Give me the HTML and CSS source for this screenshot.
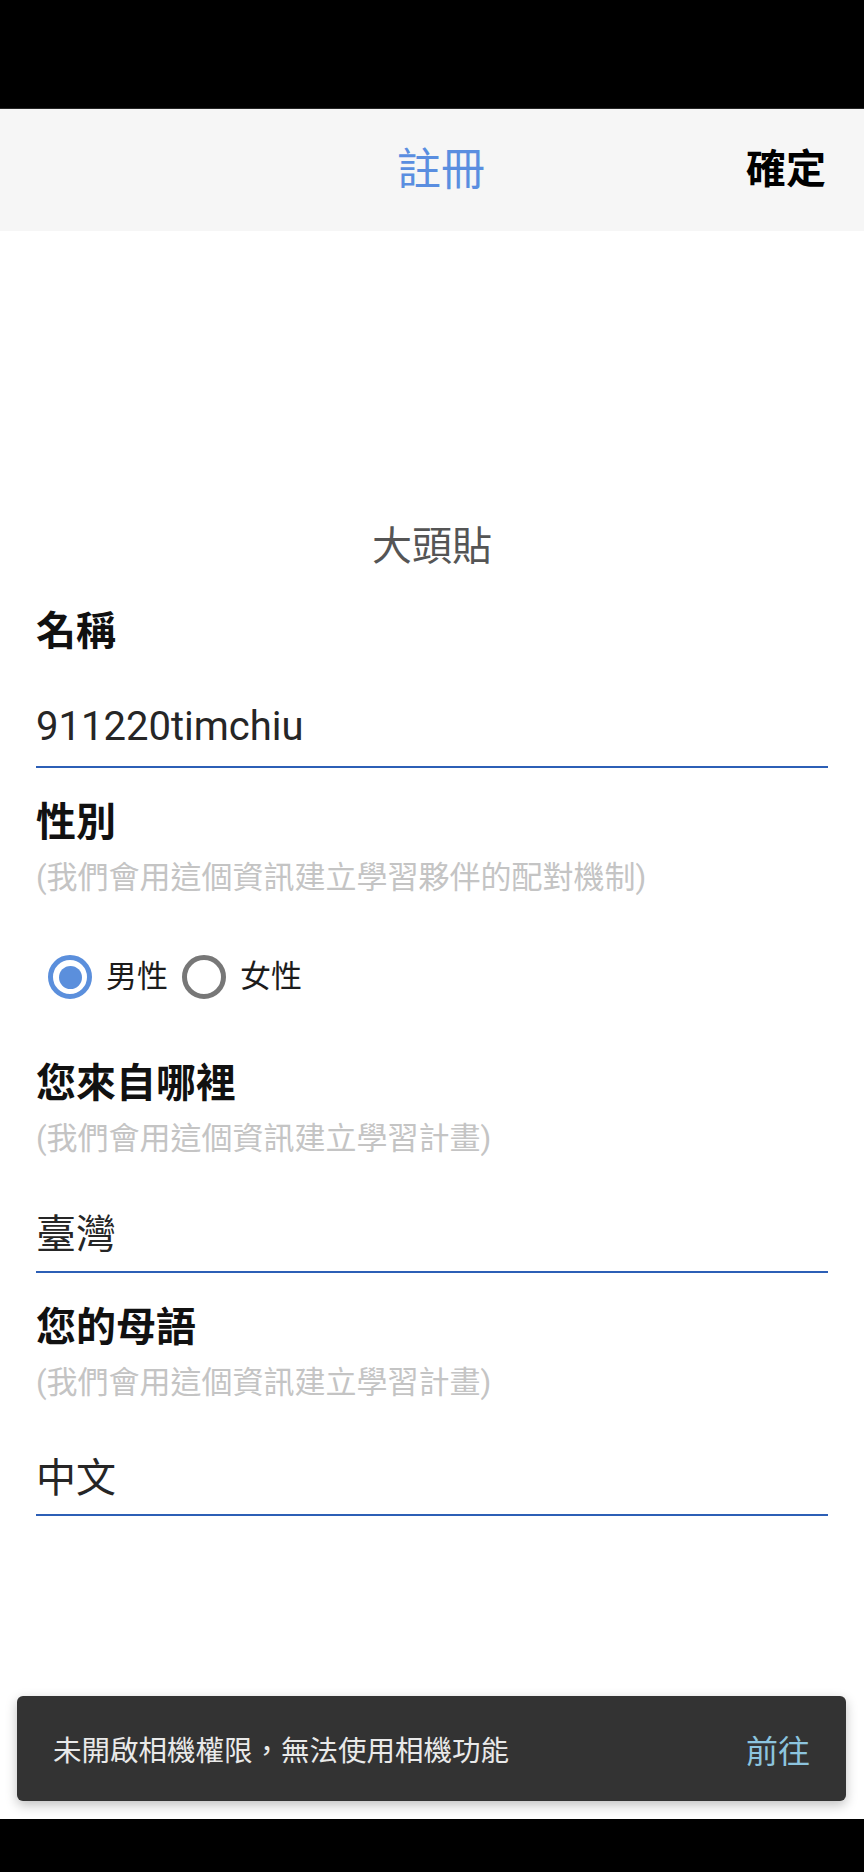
FILE: index.html
```html
<!DOCTYPE html>
<html lang="zh-Hant">
  <head>
    <meta charset="UTF-8" />
    <meta name="viewport" content="width=device-width, initial-scale=1.0" />
    <title>註冊</title>
    <link rel="stylesheet" href="styles.css">
  </head>
  <body>
    <div class="screen">
      <div class="status-bar"></div>

      <header class="app-bar">
        <div></div>
        <h1 class="app-title">註冊</h1>
        <button class="confirm">確定</button>
      </header>

      <main class="content">
        <div class="avatar"></div>
        <p class="avatar-caption">大頭貼</p>

        <div class="field field-first">
          <label class="field-label" for="nome">名稱</label>
          <input class="text-input" type="text" id="nome" value="911220timchiu">
        </div>

        <div class="field">
          <div class="field-label">性別</div>
          <div class="field-hint">(我們會用這個資訊建立學習夥伴的配對機制)</div>
          <div class="radio-group">
            <span class="radio checked"></span>
            <span class="radio-text">男性</span>
            <span class="radio"></span>
            <span class="radio-text">女性</span>
          </div>
        </div>

        <div class="field">
          <label class="field-label" for="origem">您來自哪裡</label>
          <div class="field-hint">(我們會用這個資訊建立學習計畫)</div>
          <input class="text-input" type="text" id="origem" value="臺灣">
        </div>

        <div class="field">
          <label class="field-label" for="lingua">您的母語</label>
          <div class="field-hint">(我們會用這個資訊建立學習計畫)</div>
          <input class="text-input input-last" type="text" id="lingua" value="中文">
        </div>

        <div class="snackbar">
          <span class="snackbar-text">未開啟相機權限，無法使用相機功能</span>
          <span class="snackbar-action">前往</span>
        </div>
      </main>

      <div class="nav-bar"></div>
    </div>
  </body>
</html>
```

FILE: styles.css
```css
body {
  margin: 0;
  font-family: Roboto, "Noto Sans CJK TC", sans-serif;
  background-color: #000;
}
.screen {
  width: 864px;
  height: 1872px;
  display: flex;
  flex-direction: column;
  background-color: #fff;
}
.status-bar {
  height: 108px;
  background-color: #000;
  border-bottom: 1px solid #262626;
}
.app-bar {
  height: 122px;
  display: grid;
  grid-template-columns: 1fr auto 1fr;
  align-items: center;
  padding: 0 38px 0 56px;
  background-color: #f6f6f6;
}
.app-title {
  margin: 0;
  font-size: 44px;
  font-weight: normal;
  color: #5a8ee0;
  line-height: 48px;
}
.confirm {
  justify-self: end;
  padding: 0;
  border: none;
  background: none;
  font-family: Roboto, "Noto Sans CJK TC", sans-serif;
  font-size: 40px;
  font-weight: bold;
  color: #000;
  line-height: 48px;
}
.content {
  flex: 1;
  position: relative;
  display: flex;
  flex-direction: column;
  padding: 0 36px;
}
.avatar {
  height: 292px;
}
.avatar-caption {
  margin: 0;
  text-align: center;
  font-size: 40px;
  line-height: 48px;
  color: #555;
}
.field {
  display: flex;
  flex-direction: column;
  margin-top: 31px;
}
.field-first {
  margin-top: 37px;
}
.field-label {
  display: block;
  margin-bottom: 11px;
  font-size: 40px;
  font-weight: bold;
  line-height: 48px;
  color: #111;
}
.field-hint {
  margin-bottom: 48px;
  font-size: 31px;
  line-height: 40px;
  color: #c4c4c4;
}
.field-first .text-input {
  margin-top: 35px;
}
.text-input {
  display: block;
  width: 100%;
  height: 66px;
  box-sizing: border-box;
  padding: 0 0 16px;
  border: none;
  border-bottom: 2px solid #2c5fb6;
  outline: none;
  font-family: Roboto, "Noto Sans CJK TC", sans-serif;
  font-size: 40px;
  line-height: 48px;
  color: #262626;
  background: none;
}
.input-last {
  height: 65px;
  padding-bottom: 15px;
}
.radio-group {
  display: flex;
  align-items: center;
  gap: 14px;
  height: 44px;
  margin: 9px 0 30px 12px;
}
.radio {
  width: 44px;
  height: 44px;
  box-sizing: border-box;
  border: 5px solid #777;
  border-radius: 50%;
  display: flex;
  align-items: center;
  justify-content: center;
}
.radio.checked {
  border-color: #5b8fdc;
}
.radio.checked::after {
  content: "";
  width: 23px;
  height: 23px;
  border-radius: 50%;
  background-color: #5b8fdc;
}
.radio-text {
  font-size: 31px;
  line-height: 44px;
  color: #1c1c1c;
}
.snackbar {
  position: absolute;
  left: 17px;
  right: 18px;
  bottom: 18px;
  height: 105px;
  display: flex;
  align-items: center;
  justify-content: space-between;
  padding: 0 36px 0 36px;
  border-radius: 6px;
  background-color: #333;
  box-shadow: 0 4px 12px rgba(0, 0, 0, 0.25);
}
.snackbar-text {
  font-size: 28.5px;
  color: #e9e9e9;
}
.snackbar-action {
  font-size: 32px;
  color: #8cc4de;
}
.nav-bar {
  height: 53px;
  background-color: #000;
}
```
